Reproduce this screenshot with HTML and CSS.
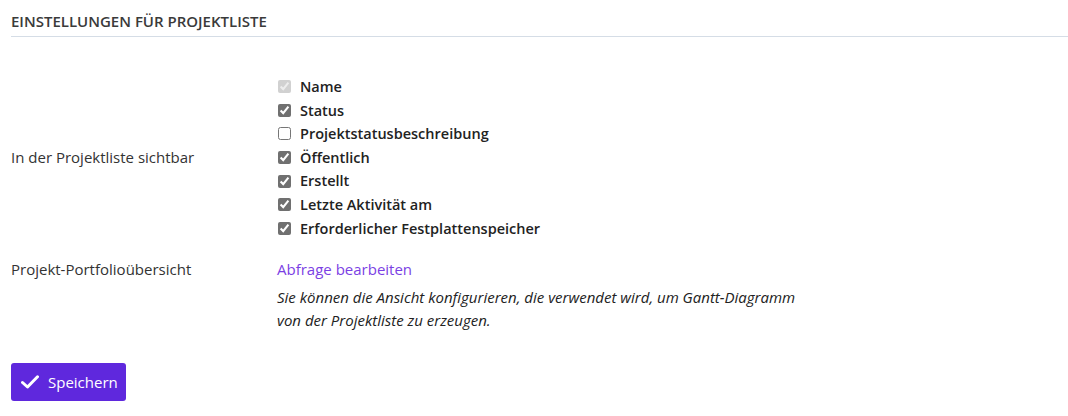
FILE: index.html
```html
<!DOCTYPE html>
<html lang="de">
<head>
<meta charset="utf-8">
<title>Einstellungen für Projektliste</title>
<link rel="stylesheet" href="styles.css">
</head>
<body>
<div class="page">
  <h2 class="section-title">Einstellungen für Projektliste</h2>
  <form class="settings">
    <div class="row row-columns">
      <div class="label">In der Projektliste sichtbar</div>
      <ul class="checklist">
        <li><label><input type="checkbox" checked disabled> Name</label></li>
        <li><label><input type="checkbox" checked> Status</label></li>
        <li><label><input type="checkbox"> Projektstatusbeschreibung</label></li>
        <li><label><input type="checkbox" checked> Öffentlich</label></li>
        <li><label><input type="checkbox" checked> Erstellt</label></li>
        <li><label><input type="checkbox" checked> Letzte Aktivität am</label></li>
        <li><label><input type="checkbox" checked> Erforderlicher Festplattenspeicher</label></li>
      </ul>
    </div>
    <div class="row row-gantt">
      <div class="label">Projekt-Portfolioübersicht</div>
      <div class="value">
        <a class="link" href="#">Abfrage bearbeiten</a>
        <p class="help">Sie können die Ansicht konfigurieren, die verwendet wird, um Gantt-Diagramm von der Projektliste zu erzeugen.</p>
      </div>
    </div>
    <button type="button" class="btn-save">
      <svg class="btn-icon" viewBox="0 0 18 14" width="18" height="14" aria-hidden="true">
        <path d="M1.5 7.5 L6.5 12 L16.5 1.8" fill="none" stroke="#fff" stroke-width="3" stroke-linecap="round" stroke-linejoin="round"/>
      </svg>
      <span>Speichern</span>
    </button>
  </form>
</div>
</body>
</html>
```

FILE: styles.css
```css
* { box-sizing: border-box; }

html, body {
  margin: 0;
  padding: 0;
  background: #fff;
}

body {
  font-family: "Open Sans", "Noto Sans", sans-serif;
  font-size: 15px;
  color: #333;
}

.page {
  padding: 11px 0 0 11px;
}

.section-title {
  margin: 0;
  font-size: 15px;
  font-weight: 600;
  line-height: 20px;
  text-transform: uppercase;
  color: #3a3a3a;
  padding-bottom: 5px;
  border-bottom: 1px solid #d5dde6;
}

.settings {
  display: flex;
  flex-direction: column;
  padding-top: 38px;
}

.row {
  display: grid;
  grid-template-columns: 266px 1fr;
}

.row-columns .label {
  align-self: center;
}

.label {
  line-height: 23.6px;
}

.checklist {
  list-style: none;
  margin: 0;
  padding: 0;
}

.checklist li {
  line-height: 23.6px;
  font-size: 14.5px;
  font-weight: 600;
  color: #222;
}

.checklist label {
  display: flex;
  align-items: center;
  gap: 9px;
}

.checklist input {
  margin: 0 0 0 1px;
  width: 13px;
  height: 13px;
  accent-color: #707070;
}

.row-gantt {
  margin-top: 18px;
}

.value {
  display: flex;
  flex-direction: column;
  align-items: flex-start;
}

.link {
  line-height: 23.6px;
  color: #7b3fe4;
  text-decoration: none;
}

.help {
  margin: 4px 0 0;
  max-width: 545px;
  font-style: italic;
  line-height: 23px;
  color: #222;
}

.btn-save {
  align-self: flex-start;
  margin-top: 31px;
  display: flex;
  align-items: center;
  gap: 9px;
  width: 115px;
  height: 38px;
  padding: 0 0 0 10px;
  border: none;
  border-radius: 3px;
  background: #5f28dd;
  color: #fff;
  font-family: inherit;
  font-size: 15px;
  cursor: pointer;
}

.btn-icon {
  flex: none;
}
```
